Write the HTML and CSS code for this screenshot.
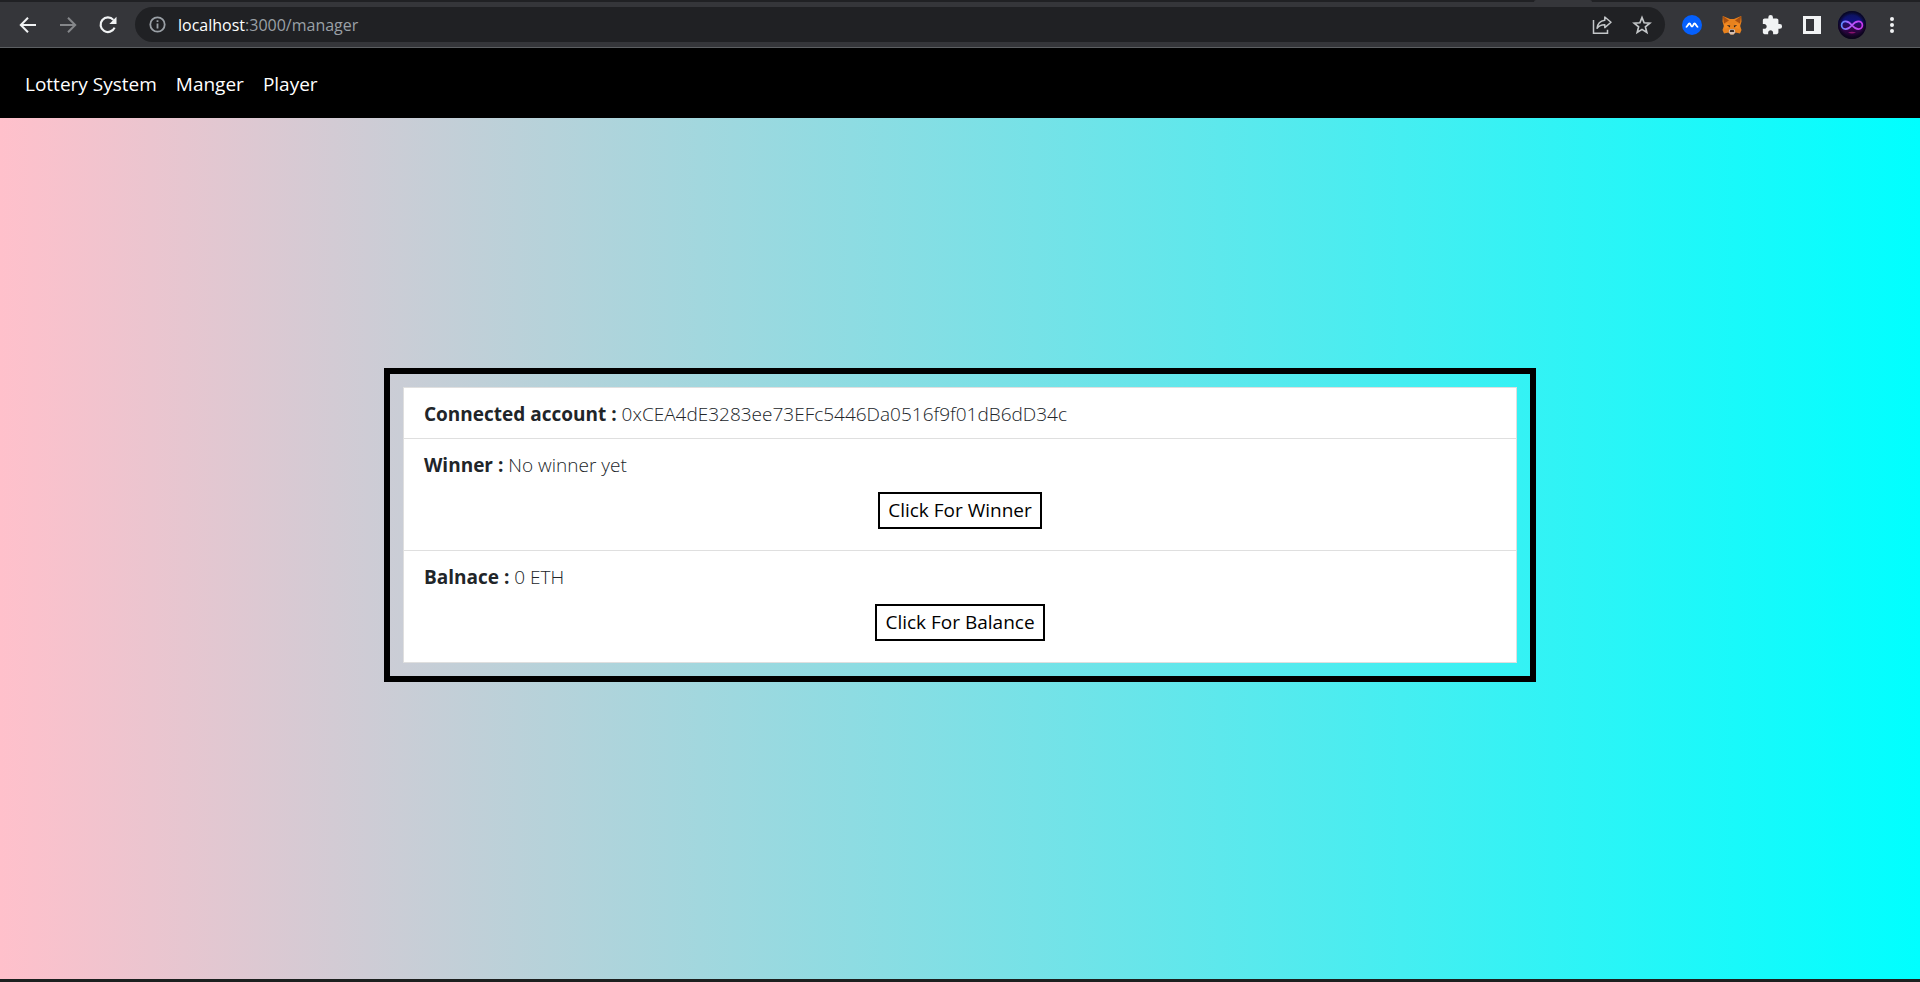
FILE: index.html
```html
<!DOCTYPE html>
<html lang="en">
<head>
<meta charset="utf-8">
<title>Lottery System</title>
<link rel="stylesheet" href="styles.css">
</head>
<body>
<div class="window">
  <div class="tabstrip"><div class="tab-edge"></div></div>
  <div class="toolbar">
    <button class="tool" type="button" aria-label="Back"><svg width="18" height="18" viewBox="0 0 18 18" fill="none" stroke="#f1f3f4" stroke-width="2"><path d="M17 9H2.5M9 1.8 1.8 9 9 16.2"/></svg></button>
    <button class="tool" type="button" aria-label="Forward"><svg width="18" height="18" viewBox="0 0 18 18" fill="none" stroke="#85878a" stroke-width="2"><path d="M1 9h14.5M9 1.8 16.2 9 9 16.2"/></svg></button>
    <button class="tool" type="button" aria-label="Reload"><svg width="20" height="20" viewBox="0 0 20 20" fill="none"><path d="M16.6 12.6A7.3 7.3 0 1 1 15.4 4.9" stroke="#f1f3f4" stroke-width="2.2"/><path d="M18.5 1.8V9h-7.2z" fill="#f1f3f4"/></svg></button>
    <div class="omnibox">
      <button class="info" type="button" aria-label="Site information"><svg width="17" height="17" viewBox="0 0 17 17"><circle cx="8.500" cy="8.500" r="7.200" fill="none" stroke="#9aa0a6" stroke-width="1.800"/><path d="M7.600 7.500h1.800v5H7.600zM7.600 4.300h1.800v1.800H7.600z" fill="#9aa0a6"/></svg></button>
      <div class="url" role="textbox" aria-label="Address"><span class="host">localhost</span>:3000/manager</div>
      <button class="tool" type="button" aria-label="Share"><svg width="20" height="20" viewBox="0 0 20 20" fill="none" stroke="#c4c7c9" stroke-width="1.500"><path d="M1.500 5v13.200h14v-3.500"/><path d="M12.800 2 19 7.300l-6.200 5.300V9.700C9.500 9.600 7 10.700 5.100 13.300 5.500 9 8 6 12.800 5.300z" stroke-linejoin="round"/></svg></button>
      <button class="tool" type="button" aria-label="Bookmark this page"><svg width="20" height="20" viewBox="0 0 20 20" fill="none" stroke="#c4c7c9" stroke-width="1.700"><path d="m10 2.500 2.100 5.300 5.700.4-4.400 3.700 1.400 5.500-4.800-3-4.800 3 1.400-5.500-4.400-3.700 5.700-.4z"/></svg></button>
    </div>
    <button class="tool" type="button" aria-label="Wallet extension"><svg width="20" height="20" viewBox="0 0 20 20"><circle cx="10" cy="10" r="10" fill="#0560fd"/><path d="M3.800 12C5.800 12 6 8.500 7.400 8.500c1.600 0 1 3 2.600 3s1-3 2.600-3c1.400 0 1.600 3.500 3.600 3.500" fill="none" stroke="#fff" stroke-width="1.800"/></svg></button>
    <button class="tool" type="button" aria-label="MetaMask"><svg width="20" height="20" viewBox="0 0 20 20"><path d="M.8 1 8 4h4l7.200-3 .3 5.500-1.300 4.500 1.300 4-1.500 3.500-4.500-1L11.500 19.500h-3L6.500 17.500 2 18.500.5 15l1.300-4L.5 6.500z" fill="#e8821e"/><path d="M.8 1 7 5.500 2 8.500zM19.200 1 13 5.500l5 3z" fill="#a9500f"/><path d="M2 9.500 6.500 8l1 4.500L2.500 14zM18 9.500 13.500 8l-1 4.500 5 1.500z" fill="#f58b22"/><path d="m4.800 10 3.400.6-.4 2zM15.200 10l-3.400.6.4 2z" fill="#33251d"/><path d="m7 15 1.500-1h3l1.500 1 .2 2.500-1.700 2h-3l-1.700-2z" fill="#d5bfb2"/><path d="M8.300 14.800h3.400l.5 2.200H7.800z" fill="#342a27"/></svg></button>
    <button class="tool" type="button" aria-label="Extensions"><svg width="22" height="22" viewBox="0 0 24 24" fill="#f1f3f4"><path d="M20.500 11H19V7c0-1.100-.9-2-2-2h-4V3.500a2.500 2.500 0 0 0-5 0V5H4c-1.100 0-1.990.9-1.990 2v3.800H3.500c1.490 0 2.700 1.210 2.700 2.700s-1.210 2.700-2.700 2.700H2V20c0 1.100.9 2 2 2h3.800v-1.500c0-1.490 1.210-2.700 2.700-2.700s2.700 1.210 2.700 2.700V22H17c1.100 0 2-.9 2-2v-4h1.500a2.500 2.500 0 0 0 0-5z"/></svg></button>
    <button class="tool" type="button" aria-label="Side panel"><svg width="18" height="18" viewBox="0 0 18 18"><path fill-rule="evenodd" d="M0 0h18v18H0zM3 3v12h8V3z" fill="#f1f3f4"/></svg></button>
    <button class="tool" type="button" aria-label="Profile"><svg width="28" height="28" viewBox="0 0 28 28"><defs><linearGradient id="face" x2="0" y2="1"><stop stop-color="#0b1450"/><stop offset=".35" stop-color="#10127c"/><stop offset=".6" stop-color="#36064f"/><stop offset="1" stop-color="#12031f"/></linearGradient><radialGradient id="shade"><stop offset=".7" stop-color="#08051a" stop-opacity="0"/><stop offset="1" stop-color="#08051a"/></radialGradient><linearGradient id="loop"><stop stop-color="#5a8cff"/><stop offset=".4" stop-color="#b45cff"/><stop offset="1" stop-color="#c936ee"/></linearGradient></defs><circle cx="14" cy="14" r="14" fill="url(#face)"/><circle cx="14" cy="14" r="14" fill="url(#shade)"/><path d="M14 14.200C11.500 11 9.500 10.300 7.500 10.300a3.900 3.900 0 0 0 0 7.800c2 0 4-.9 6.500-3.900 2.500-3.200 4.500-3.900 6.500-3.900a3.900 3.900 0 0 1 0 7.800c-2 0-4-.9-6.500-3.900z" fill="none" stroke="url(#loop)" stroke-width="1.700"/><path d="M10 21.500q4-1.500 8 0-4 2-8 0z" fill="#8b126e"/></svg></button>
    <button class="tool" type="button" aria-label="Menu"><svg width="4" height="18" viewBox="0 0 4 18" fill="#f1f3f4"><circle cx="2" cy="3" r="2"/><circle cx="2" cy="9" r="2"/><circle cx="2" cy="15" r="2"/></svg></button>
  </div>
  <nav class="navbar">
    <a href="#">Lottery System</a>
    <a href="#">Manger</a>
    <a href="#">Player</a>
  </nav>
  <main class="page">
    <section class="panel">
      <ul class="list">
        <li class="row"><p><b>Connected account :</b> 0xCEA4dE3283ee73EFc5446Da0516f9f01dB6dD34c</p></li>
        <li class="row"><p><b>Winner :</b> No winner yet</p><button class="action" type="button">Click For Winner</button></li>
        <li class="row"><p><b>Balnace :</b> 0 ETH</p><button class="action" type="button">Click For Balance</button></li>
      </ul>
    </section>
  </main>
</div>
</body>
</html>
```
FILE: styles.css
```css
* { box-sizing: border-box; }
body { margin: 0; font-family: "Open Sans", "Noto Sans", sans-serif; color: #212529; }
button { font: inherit; color: inherit; background: none; border: 0; padding: 0; cursor: pointer; }
svg { display: block; }

.window { min-height: 100vh; display: flex; flex-direction: column; border-bottom: 3px solid #1c201f; }
.tabstrip { height: 2px; background: #202124; display: flex; justify-content: flex-end; padding-right: 328px; }
.tab-edge { width: 58px; background: #35363a; border-radius: 2px 2px 0 0; }

.toolbar { display: flex; align-items: center; height: 46px; padding: 0 8px; background: #35363a; border-bottom: 1px solid #5c5f62; }
.tool { width: 40px; height: 36px; display: flex; align-items: center; justify-content: center; flex: none; }
.omnibox { flex: 1; height: 35px; margin: 0 7px; padding: 0 3px 0 14px; display: flex; align-items: center; background: #202124; border-radius: 18px; }
.url { flex: 1; margin-left: 12px; font-size: 16px; line-height: 24px; color: #9aa0a6; }
.host { color: #fff; }

.navbar { display: flex; align-items: center; gap: 19px; height: 70px; padding: 2px 25px 0; background: #000; }
.navbar a { color: #fff; text-decoration: none; font-size: 19px; line-height: 30px; }

.page { flex: 1; display: flex; align-items: center; justify-content: center; padding: 24px 0 71px; background: linear-gradient(to right, pink, cyan); }
.panel { width: 60%; padding: 13px; border: 6px solid #000; }
.list { list-style: none; margin: 0; padding: 0; background: #fff; border: 1px solid #dfdfdf; }
.row { display: flex; flex-direction: column; padding: 11px 20px 9px; font-size: 19px; line-height: 30px; font-weight: 300; }
.row + .row { border-top: 1px solid #dfdfdf; }
.row p { margin: 0; overflow-wrap: anywhere; }
.row b { font-weight: 700; }
.action { align-self: center; margin: 12px 0; padding: 0 8px; border: 2px solid #000; color: #000; font-weight: 400; line-height: 33px; }
```
